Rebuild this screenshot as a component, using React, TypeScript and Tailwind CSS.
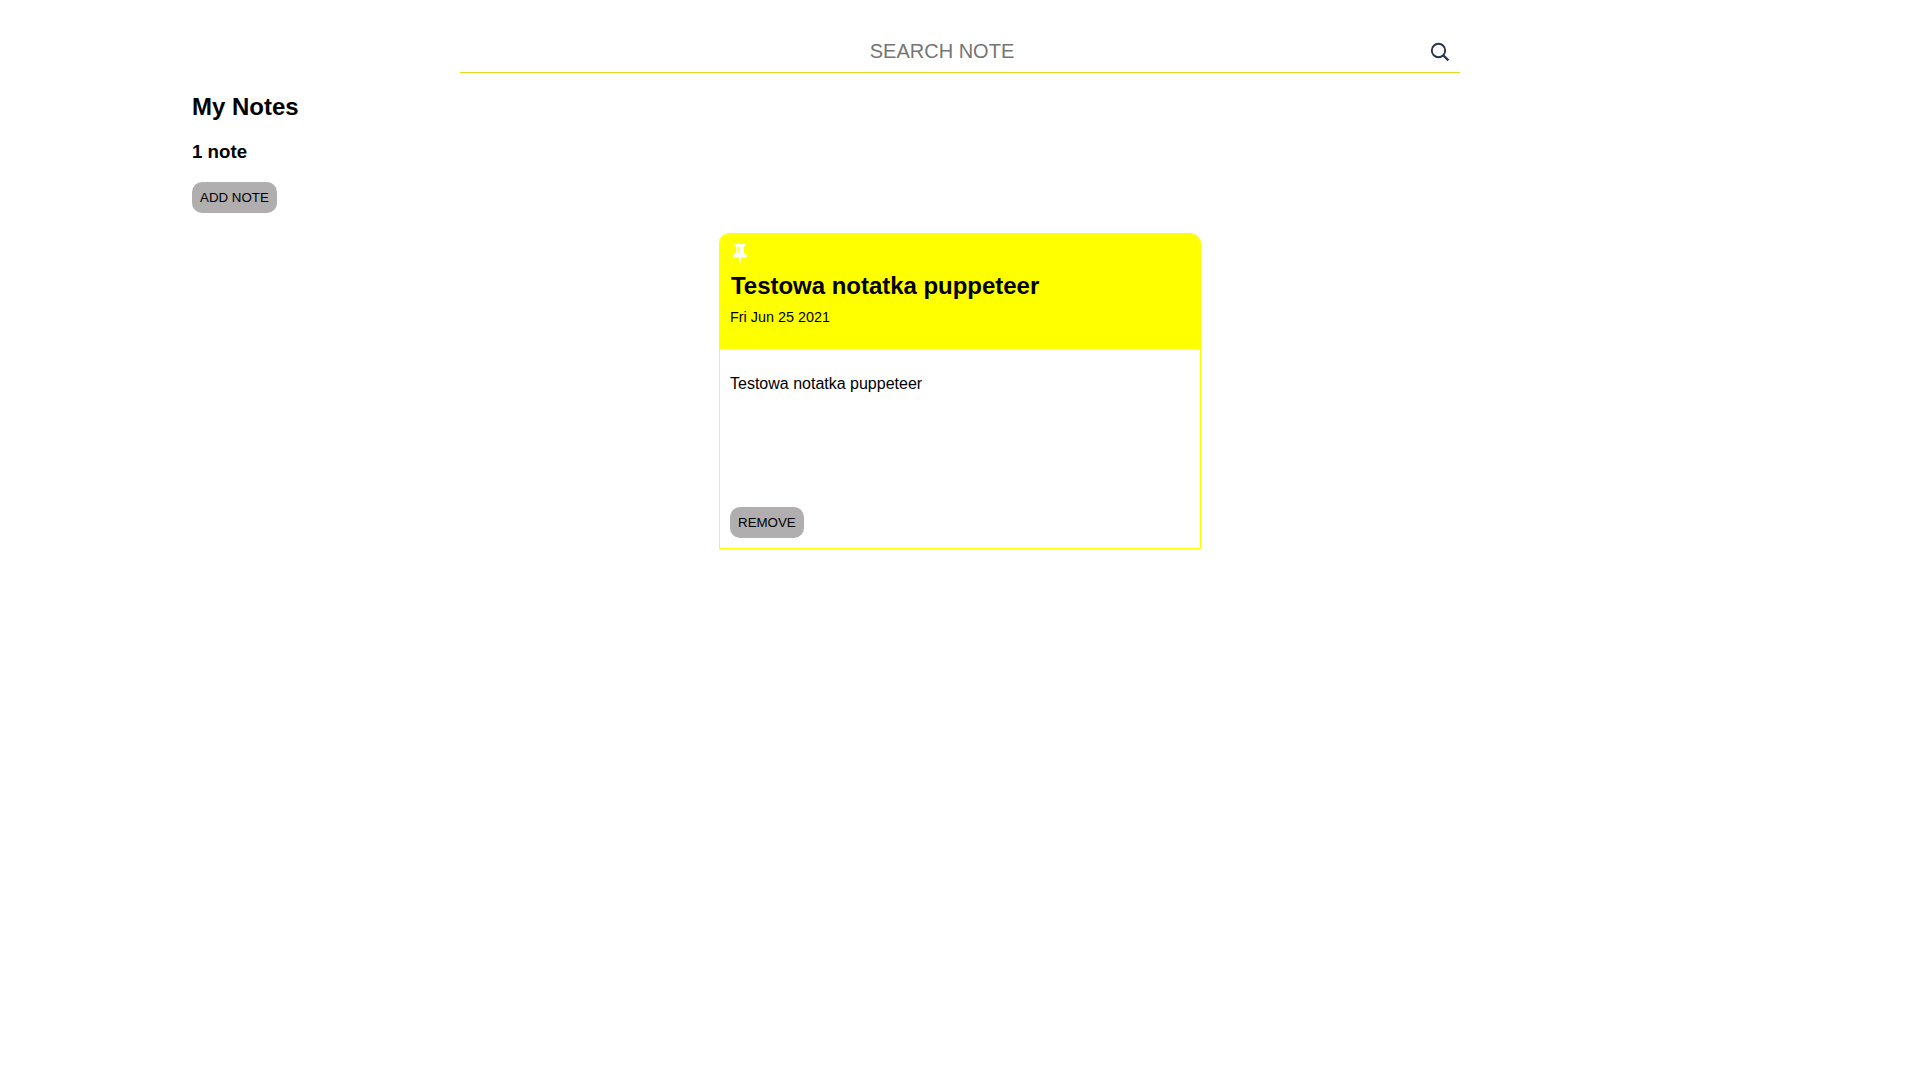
import React from "react";

type Note = { title: string; date: string; body: string };

const notes: Note[] = [
  { title: "Testowa notatka puppeteer", date: "Fri Jun 25 2021", body: "Testowa notatka puppeteer" },
];

function SearchIcon() {
  return (
    <svg width="20" height="20" viewBox="0 0 20 20" fill="none" stroke="#2b3252" strokeWidth="1.9">
      <circle cx="8.5" cy="8.5" r="6.7" />
      <path d="M13.2 13.2 18.4 18.4" strokeWidth="2.3" />
    </svg>
  );
}

function PinIcon() {
  return (
    <svg width="14" height="20" viewBox="0 0 14 20" fill="#fff">
      <path d="M2.6 0h8.8c.8 0 1.1.6 1.1 1.2s-.4 1.2-1.1 1.2h-.5v6c1.9.9 3.1 2.3 3.1 4.3 0 .5-.4.8-.8.8H8.2L7.4 19.6c-.1.5-.7.5-.8 0L6 13.500H.8c-.4 0-.8-.3-.8-.8 0-2 1.300-3.400 3.100-4.300v-6h-.5c-.7 0-1.100-.6-1.100-1.200S1.900 0 2.600 0Z" />
      <path d="M5 2.800h.9v5.800H5z" fill="#ff0" />
    </svg>
  );
}

function Button({ children }: { children: React.ReactNode }) {
  return (
    <button className="h-[31px] w-fit rounded-[10px] bg-[#b0aeae] px-2 text-[13.3333px] leading-[15px] text-black">
      {children}
    </button>
  );
}

function NoteCard({ note }: { note: Note }) {
  return (
    <article className="flex h-[316px] w-[482px] flex-col rounded-t-[10px] border border-[#ff0]">
      <header className="h-[115px] rounded-t-[9px] bg-[#ff0] px-[10px] pt-[10px]">
        <div className="ml-[3px] h-5">
          <PinIcon />
        </div>
        <h2 className="mt-[8px] ml-px text-2xl leading-7 font-bold tracking-[-0.03px]">{note.title}</h2>
        <p className="mt-[9px] text-[14.4px] leading-4">{note.date}</p>
      </header>
      <p className="mt-[26px] px-[10px] text-base leading-[18px]">{note.body}</p>
      <div className="mt-auto flex px-[10px] pb-[10px]">
        <Button>REMOVE</Button>
      </div>
    </article>
  );
}

export default function App() {
  return (
    <div className="min-h-screen bg-white font-['Liberation_Sans',Arial,sans-serif] text-black">
      <div className="mx-auto flex h-[73px] w-[1000px] items-end border-b border-[#e0d920]">
        <input
          className="mb-2 h-[26px] w-[964px] text-center text-xl outline-none placeholder:text-[#757575]"
          placeholder="SEARCH NOTE"
        />
        <div className="mb-[10px] ml-[6px]">
          <SearchIcon />
        </div>
      </div>
      <main className="mx-auto w-[1536px]">
        <h2 className="pt-5 text-2xl leading-7 font-bold">My Notes</h2>
        <h3 className="mt-5 text-[18.72px] leading-[21px] font-bold">1 note</h3>
        <div className="mt-5 flex">
          <Button>ADD NOTE</Button>
        </div>
        <div className="mt-5 flex justify-center">
          {notes.map((n) => (
            <NoteCard key={n.title} note={n} />
          ))}
        </div>
      </main>
    </div>
  );
}
